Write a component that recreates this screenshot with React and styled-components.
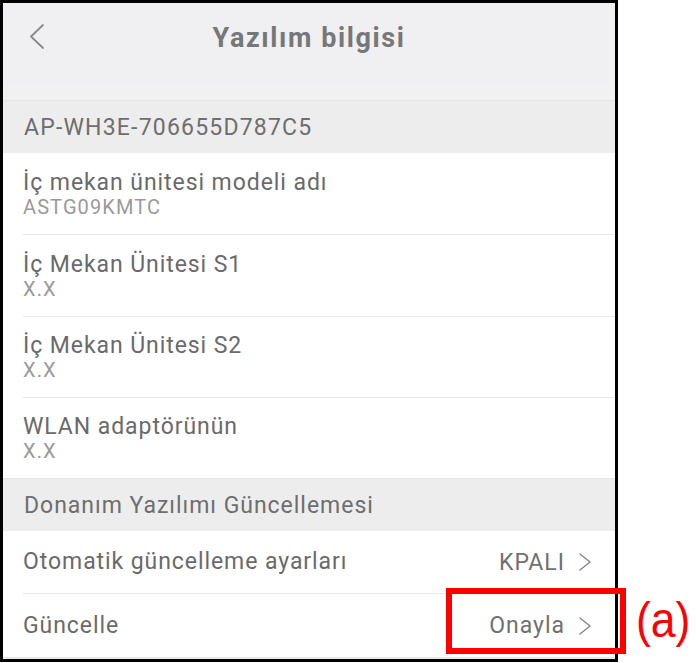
import React from "react";
import styled, { createGlobalStyle } from "styled-components";

const Global = createGlobalStyle`
  html, body { margin: 0; padding: 0; background: #ffffff; }
  body { font-family: Roboto, "Noto Sans", "Liberation Sans", sans-serif; }
  * { box-sizing: border-box; }
`;

const Stage = styled.div`
  position: relative;
  width: 696px;
  height: 663px;
  background: #ffffff;
`;

const Phone = styled.div`
  width: 618px;
  height: 662px;
  border: 3px solid #000000;
  background: #ffffff;
  display: flex;
  flex-direction: column;
  overflow: hidden;
`;

const Header = styled.header`
  flex: 0 0 97px;
  background: linear-gradient(#f0f0f2 0%, #f0f0f2 80%, #f2f2f3 100%);
  display: grid;
  grid-template-columns: 60px 1fr 60px;
  align-items: start;
  padding-top: 16px;
`;

const Back = styled.button`
  border: none;
  background: transparent;
  padding: 0 0 0 26px;
  height: 34px;
  display: flex;
  align-items: center;
  cursor: pointer;
`;

const Title = styled.h1`
  margin: 0;
  text-align: center;
  font-size: 27px;
  line-height: 38px;
  font-weight: 700;
  color: #767779;
  letter-spacing: 1.6px;
`;

const Section = styled.div`
  flex: 0 0 ${(p) => p.$h}px;
  background: #ededed;
  border-top: 1px solid #e4e4e4;
  display: flex;
  align-items: center;
  padding-left: 21px;
  font-size: 23px;
  color: #6e6e6e;
  letter-spacing: ${(p) => p.$ls || 1}px;
`;

const Row = styled.div`
  flex: 0 0 ${(p) => p.$h}px;
  margin-left: 20px;
  padding-right: 24px;
  border-bottom: ${(p) => (p.$last ? "none" : "1px solid #e9e9e9")};
  display: flex;
  align-items: center;
  justify-content: space-between;
`;

const Texts = styled.div`
  display: flex;
  flex-direction: column;
`;

const RowTitle = styled.div`
  font-size: 23px;
  line-height: 26px;
  color: #6a6a6a;
  letter-spacing: 0.93px;
`;

const RowSub = styled.div`
  font-size: 20px;
  line-height: 22px;
  color: #9a9a9a;
  letter-spacing: 1.1px;
`;

const Value = styled.div`
  display: flex;
  align-items: center;
  gap: 14px;
  font-size: 23px;
  color: #707070;
  letter-spacing: 1px;
`;

const Mark = styled.div`
  position: absolute;
  left: 446px;
  top: 588px;
  width: 180px;
  height: 66px;
  border: 6px solid #ff0000;
  pointer-events: none;
`;

const Label = styled.div`
  position: absolute;
  left: 636px;
  top: 591px;
  font-family: "Liberation Sans", Arial, sans-serif;
  font-size: 50px;
  line-height: 58px;
  color: #ff0000;
  transform: scaleX(0.89);
  transform-origin: left center;
`;

const Chevron = ({ w = 12, h = 18, color = "#8a8a8a", sw = 1.6 }) => (
  <svg width={w} height={h} viewBox={`0 0 ${w} ${h}`} fill="none">
    <polyline
      points={`1,1 ${w - 1},${h / 2} 1,${h - 1}`}
      stroke={color}
      strokeWidth={sw}
      strokeLinecap="round"
      strokeLinejoin="round"
    />
  </svg>
);

const BackIcon = () => (
  <svg width="16" height="25" viewBox="0 0 16 25" fill="none">
    <polyline
      points="14,1 2,12.5 14,24"
      stroke="#8a8a8a"
      strokeWidth="1.8"
      strokeLinecap="round"
      strokeLinejoin="round"
    />
  </svg>
);

const infoRows = [
  { t: "İç mekan ünitesi modeli adı", s: "ASTG09KMTC", h: 82 },
  { t: "İç Mekan Ünitesi S1", s: "X.X", h: 82 },
  { t: "İç Mekan Ünitesi S2", s: "X.X", h: 81 },
  { t: "WLAN adaptörünün", s: "X.X", h: 80, last: true },
];

export default function App() {
  return (
    <>
      <Global />
      <Stage>
        <Phone>
          <Header>
            <Back aria-label="Geri">
              <BackIcon />
            </Back>
            <Title>Yazılım bilgisi</Title>
            <span />
          </Header>
          <Section $h={53} $ls={1.2}>AP-WH3E-706655D787C5</Section>
          {infoRows.map((r) => (
            <Row key={r.t} $h={r.h} $last={r.last}>
              <Texts>
                <RowTitle>{r.t}</RowTitle>
                <RowSub>{r.s}</RowSub>
              </Texts>
            </Row>
          ))}
          <Section $h={53} $ls={0.97}>Donanım Yazılımı Güncellemesi</Section>
          <Row $h={63}>
            <RowTitle>Otomatik güncelleme ayarları</RowTitle>
            <Value>
              KPALI
              <Chevron />
            </Value>
          </Row>
          <Row $h={63} $last>
            <RowTitle>Güncelle</RowTitle>
            <Value>
              Onayla
              <Chevron />
            </Value>
          </Row>
          <Section $h={20} />
        </Phone>
        <Mark />
        <Label>(a)</Label>
      </Stage>
    </>
  );
}
